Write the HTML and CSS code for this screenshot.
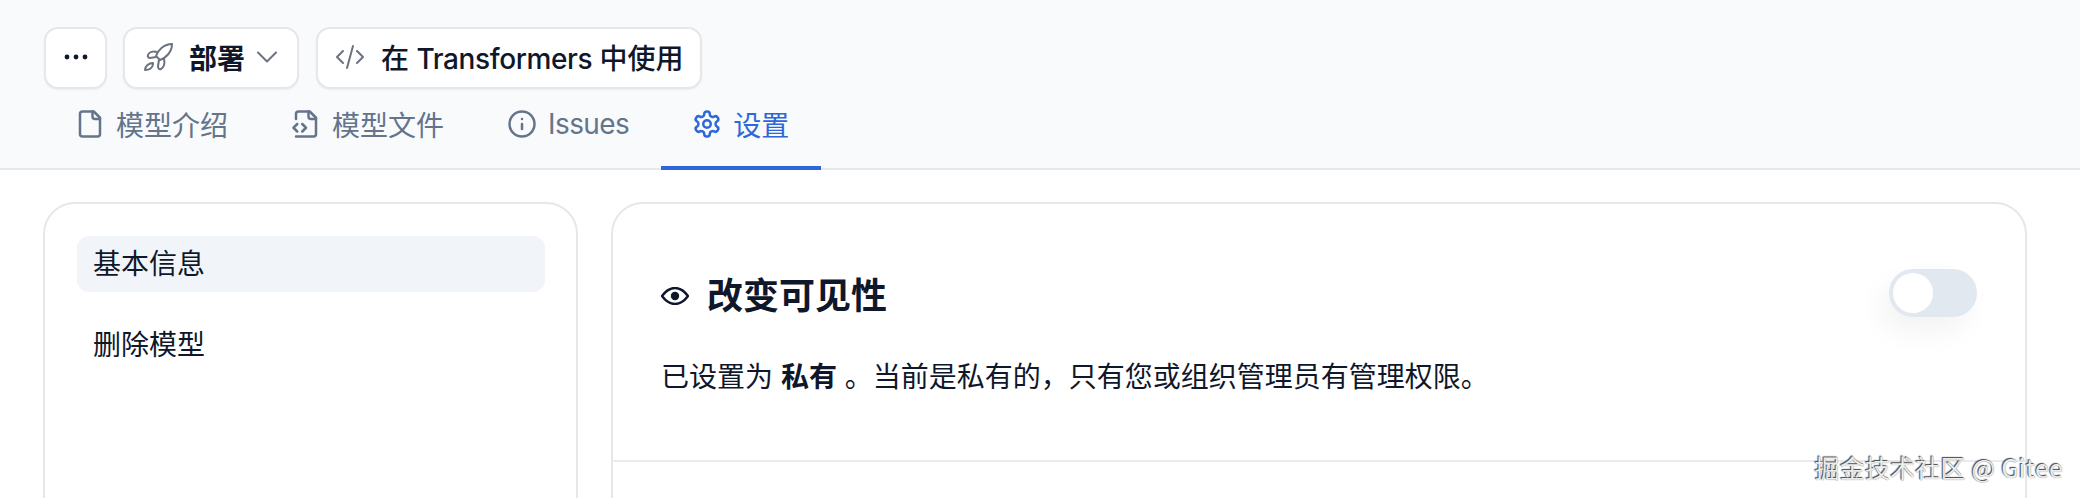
FILE: index.html
```html
<!DOCTYPE html>
<html lang="zh-CN">
<head>
<meta charset="utf-8">
<title>设置</title>
<link rel="stylesheet" href="styles.css">
</head>
<body>
<header class="header">
  <div class="actions">
    <button class="btn btn-more" aria-label="更多">
      <svg class="dots" viewBox="0 0 24 6"><circle cx="3" cy="3" r="2.4"/><circle cx="12" cy="3" r="2.4"/><circle cx="21" cy="3" r="2.4"/></svg>
    </button>
    <button class="btn btn-deploy">
      <svg class="rocket" viewBox="0 0 30 30"><path d="M28 2C20 2 14 8 12 14l4 4c6-2 12-8 12-16Z"/><path d="M13 10C9 9 5 10 4 13c-1 2 1 3 2 3l6-1"/><path d="M20 17c1 4 0 8-3 10-2 1-3-1-3-3l1-6"/><path d="M9 21c-4 0-8 3-8 7 4 0 8-2 8-7Z"/></svg>
      <span class="btn-label">部署</span>
      <svg class="chev" viewBox="0 0 20 12"><path d="M1 1.5 10 10.5 19 1.5"/></svg>
    </button>
    <button class="btn btn-code">
      <svg class="code" viewBox="0 0 28 28"><path d="M7 8 1 14l6 6"/><path d="M21 8l6 6-6 6"/><path d="M17 3 11 25"/></svg>
      <span class="btn-label">在 <span class="latin">Transformers</span> 中使用</span>
    </button>
  </div>
  <nav class="tabs">
    <a class="tab">
      <svg class="icon" viewBox="0 0 24 24"><path d="M15 2H6a2 2 0 0 0-2 2v16a2 2 0 0 0 2 2h12a2 2 0 0 0 2-2V7Z"/><path d="M14 2v4a2 2 0 0 0 2 2h4"/></svg>
      <span>模型介绍</span>
    </a>
    <a class="tab">
      <svg class="icon" viewBox="0 0 24 24"><path d="M4 22h14a2 2 0 0 0 2-2V7l-5-5H6a2 2 0 0 0-2 2v4"/><path d="M14 2v4a2 2 0 0 0 2 2h4"/><path d="m5 12-3 3 3 3"/><path d="m9 18 3-3-3-3"/></svg>
      <span>模型文件</span>
    </a>
    <a class="tab">
      <svg class="icon" viewBox="0 0 24 24"><circle cx="12" cy="12" r="10"/><path d="M12 16v-4"/><path d="M12 8h.01"/></svg>
      <span class="tab-latin">Issues</span>
    </a>
    <a class="tab tab-active">
      <svg class="icon" viewBox="0 0 24 24"><path d="M12.22 2h-.44a2 2 0 0 0-2 2v.18a2 2 0 0 1-1 1.73l-.43.25a2 2 0 0 1-2 0l-.15-.08a2 2 0 0 0-2.73.73l-.22.38a2 2 0 0 0 .73 2.73l.15.1a2 2 0 0 1 1 1.72v.51a2 2 0 0 1-1 1.74l-.15.09a2 2 0 0 0-.73 2.73l.22.38a2 2 0 0 0 2.73.73l.15-.08a2 2 0 0 1 2 0l.43.25a2 2 0 0 1 1 1.73V20a2 2 0 0 0 2 2h.44a2 2 0 0 0 2-2v-.18a2 2 0 0 1 1-1.73l.43-.25a2 2 0 0 1 2 0l.15.08a2 2 0 0 0 2.73-.73l.22-.39a2 2 0 0 0-.73-2.73l-.15-.08a2 2 0 0 1-1-1.74v-.5a2 2 0 0 1 1-1.74l.15-.09a2 2 0 0 0 .73-2.73l-.22-.38a2 2 0 0 0-2.73-.73l-.15.08a2 2 0 0 1-2 0l-.43-.25a2 2 0 0 1-1-1.73V4a2 2 0 0 0-2-2Z"/><circle cx="12" cy="12" r="3"/></svg>
      <span>设置</span>
    </a>
  </nav>
</header>
<main class="content">
  <aside class="card side">
    <a class="side-item side-item-active">基本信息</a>
    <a class="side-item">删除模型</a>
  </aside>
  <section class="card panel">
    <div class="setting">
      <div class="setting-head">
        <h2 class="setting-title">
          <svg class="eye" viewBox="0 0 28 18"><path d="M1 9C5 3.500 9 1 14 1s9 2.500 13 8c-4 5.500-8 8-13 8S5 14.500 1 9Z"/><circle cx="14" cy="9" r="4.200"/></svg>
          <span>改变可见性</span>
        </h2>
        <span class="toggle"><span class="knob"></span></span>
      </div>
      <p class="setting-desc">已设置为 <strong>私有</strong> 。当前是私有的，只有您或组织管理员有管理权限。</p>
    </div>
  </section>
</main>
<div class="watermark">掘金技术社区 @ Gitee</div>
</body>
</html>
```
FILE: styles.css
```css
* { box-sizing: border-box; }

html, body { margin: 0; height: 100%; }

body {
  position: relative;
  overflow: hidden;
  background: #fff;
  color: #0f172a;
  font-family: Inter, "Noto Sans CJK SC", sans-serif;
  font-size: 28px;
}

.header {
  height: 170px;
  padding: 27px 43px 0 44px;
  background: #f8fafc;
  border-bottom: 2px solid #e5e7eb;
}

.actions {
  display: flex;
  gap: 16px;
}

.btn {
  display: flex;
  align-items: center;
  height: 62px;
  padding: 0 0 2px;
  background: #fff;
  border: 2px solid #e5e7eb;
  border-radius: 14px;
  box-shadow: 0 1px 2px rgba(15, 23, 42, 0.05);
  color: #0f172a;
  font: 600 28px Inter, "Noto Sans CJK SC", sans-serif;
}

.btn-more {
  width: 63px;
  justify-content: center;
}

.dots {
  width: 24px;
  height: 6px;
  fill: #0f172a;
}

.btn-deploy {
  width: 176px;
  padding-left: 19px;
}

.rocket {
  width: 30px;
  height: 30px;
  fill: none;
  stroke: #6b7280;
  stroke-width: 2;
  stroke-linejoin: round;
  stroke-linecap: round;
}

.btn-deploy .btn-label { margin-left: 15px; }

.chev {
  width: 20px;
  height: 12px;
  margin-left: 12px;
  fill: none;
  stroke: #6b7280;
  stroke-width: 2;
  stroke-linecap: round;
  stroke-linejoin: round;
}

.btn-code {
  width: 386px;
  margin-left: 1px;
  padding-left: 18px;
  font-weight: 500;
}

.code {
  width: 28px;
  height: 28px;
  fill: none;
  stroke: #6b7280;
  stroke-width: 2;
  stroke-linecap: round;
  stroke-linejoin: round;
}

.btn-code .btn-label { margin-left: 17px; }

.latin { letter-spacing: -0.4px; }

.tabs {
  display: flex;
  height: 81px;
}

.tab {
  display: flex;
  align-items: center;
  gap: 11px;
  height: 81px;
  padding: 0 32px 7px;
  border-bottom: 4px solid transparent;
  color: #64748b;
  font-weight: 400;
}

.tab-latin { letter-spacing: -0.6px; }

.tab-active {
  color: #2f66d8;
  border-bottom-color: #2f66d8;
}

.icon {
  width: 30px;
  height: 30px;
  margin-left: -1px;
  fill: none;
  stroke: currentColor;
  stroke-width: 2;
  stroke-linecap: round;
  stroke-linejoin: round;
}

.content {
  display: flex;
  gap: 33px;
  padding: 32px 53px 0 43px;
}

.card {
  height: 400px;
  background: #fff;
  border: 2px solid #e5e7eb;
  border-radius: 32px;
}

.side {
  display: flex;
  flex-direction: column;
  gap: 25px;
  width: 535px;
  padding: 32px 31px 32px 32px;
}

.side-item {
  display: flex;
  align-items: center;
  height: 56px;
  padding: 0 16px;
  border-radius: 12px;
  line-height: 40px;
}

.side-item-active { background: #f1f5f9; }

.panel { width: 1416px; }

.setting {
  padding: 64px 48px 63px;
  border-bottom: 2px solid #e9ebef;
}

.setting-head {
  display: flex;
  justify-content: space-between;
  height: 56px;
  margin-bottom: 33px;
}

.setting-title {
  display: flex;
  align-items: center;
  gap: 18px;
  margin: 0;
  font-size: 36px;
  font-weight: 700;
  line-height: 56px;
}

.eye {
  width: 28px;
  height: 18px;
  fill: none;
  stroke: #0f172a;
  stroke-width: 2.400;
  stroke-linejoin: round;
}

.eye circle {
  fill: #0f172a;
  stroke: none;
}

.toggle {
  display: flex;
  align-items: center;
  width: 88px;
  height: 48px;
  margin-top: 1px;
  padding: 0 4px;
  background: #e2e8f0;
  border-radius: 24px;
  box-shadow: -8px 14px 28px rgba(15, 23, 42, 0.05);
}

.knob {
  width: 40px;
  height: 40px;
  background: #fff;
  border-radius: 50%;
}

.setting-desc {
  margin: 0;
  line-height: 40px;
}

.setting-desc strong { font-weight: 700; }

.watermark {
  position: absolute;
  right: 17px;
  bottom: 14px;
  color: #ececec;
  font-family: "Noto Sans CJK SC", sans-serif;
  font-size: 25px;
  letter-spacing: 0.2px;
  line-height: 34px;
  text-shadow: -1px -1px 1px #444, 0 0 1px #777;
}
```
